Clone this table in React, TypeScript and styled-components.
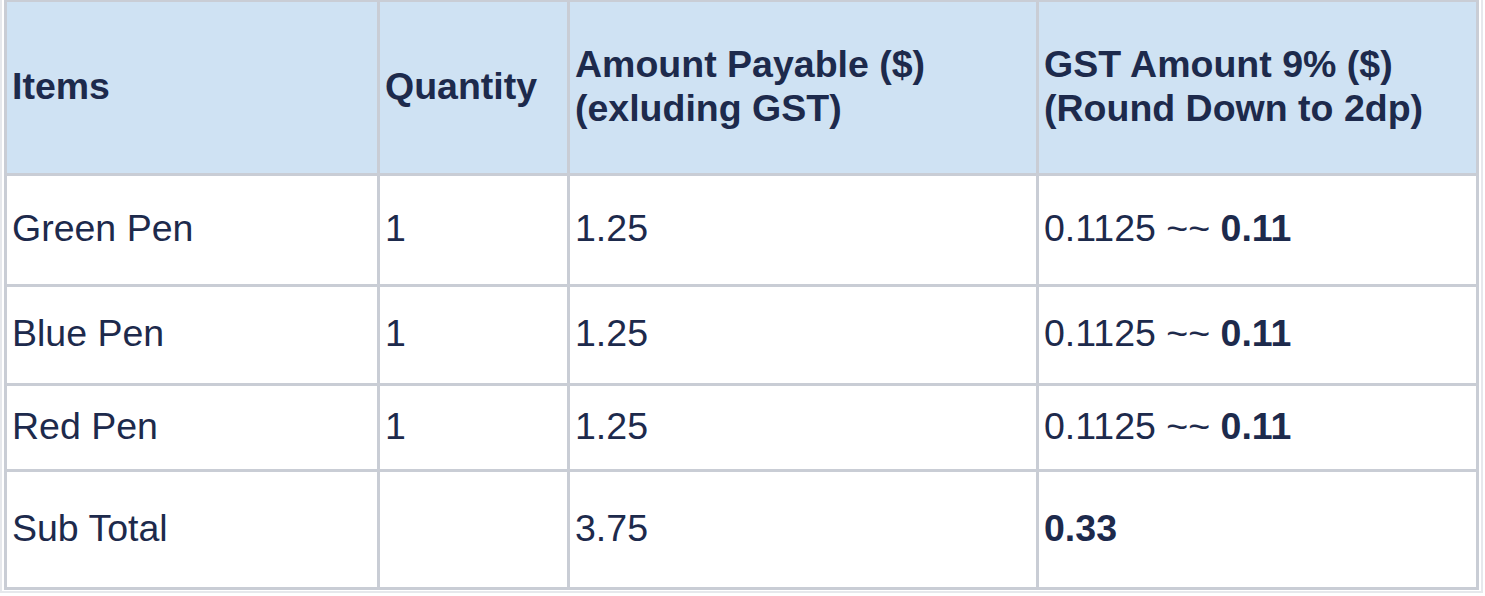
import React from "react";
import styled, { createGlobalStyle } from "styled-components";

const Global = createGlobalStyle`
  html, body { margin: 0; padding: 0; background: #ffffff; overflow: hidden; }
  body { font-family: "Liberation Sans", Arial, sans-serif; }
`;

const Frame = styled.div`
  margin-top: -1px;
  padding: 0 2px 1px 2px;
  border: 2px solid #e6e8ec;
  border-top: none;
  box-sizing: border-box;
  width: 1483px;
`;

const Grid = styled.div`
  display: grid;
  grid-template-columns: 370px 187px 466px 437px;
  grid-template-rows: 171px 108px 96px 83px 115px;
  gap: 3px;
  padding: 3px;
  background: #c9cdd5;
  width: max-content;
`;

const Cell = styled.div<{ $head?: boolean }>`
  display: flex;
  align-items: center;
  padding: 0 5px 4px 5px;
  background: ${(p) => (p.$head ? "#cfe2f3" : "#ffffff")};
  color: #1d2a4c;
  font-family: "Liberation Sans", Arial, sans-serif;
  font-size: 37.5px;
  line-height: 44px;
  font-weight: ${(p) => (p.$head ? 700 : 400)};
  white-space: nowrap;
`;

const B = styled.b`
  font-weight: 700;
`;

const rows = [
  ["Green Pen", "1", "1.25"],
  ["Blue Pen", "1", "1.25"],
  ["Red Pen", "1", "1.25"],
];

export default function App() {
  return (
    <>
      <Global />
      <Frame>
        <Grid>
          <Cell $head>Items</Cell>
          <Cell $head>Quantity</Cell>
          <Cell $head>
            <span>
              Amount Payable ($)
              <br />
              (exluding GST)
            </span>
          </Cell>
          <Cell $head>
            <span>
              GST Amount 9% ($)
              <br />
              (Round Down to 2dp)
            </span>
          </Cell>
          {rows.map((r) => (
            <React.Fragment key={r[0]}>
              <Cell>{r[0]}</Cell>
              <Cell>{r[1]}</Cell>
              <Cell>{r[2]}</Cell>
              <Cell>
                <span>
                  0.1125 ~~ <B>0.11</B>
                </span>
              </Cell>
            </React.Fragment>
          ))}
          <Cell>Sub Total</Cell>
          <Cell />
          <Cell>3.75</Cell>
          <Cell>
            <B>0.33</B>
          </Cell>
        </Grid>
      </Frame>
    </>
  );
}
